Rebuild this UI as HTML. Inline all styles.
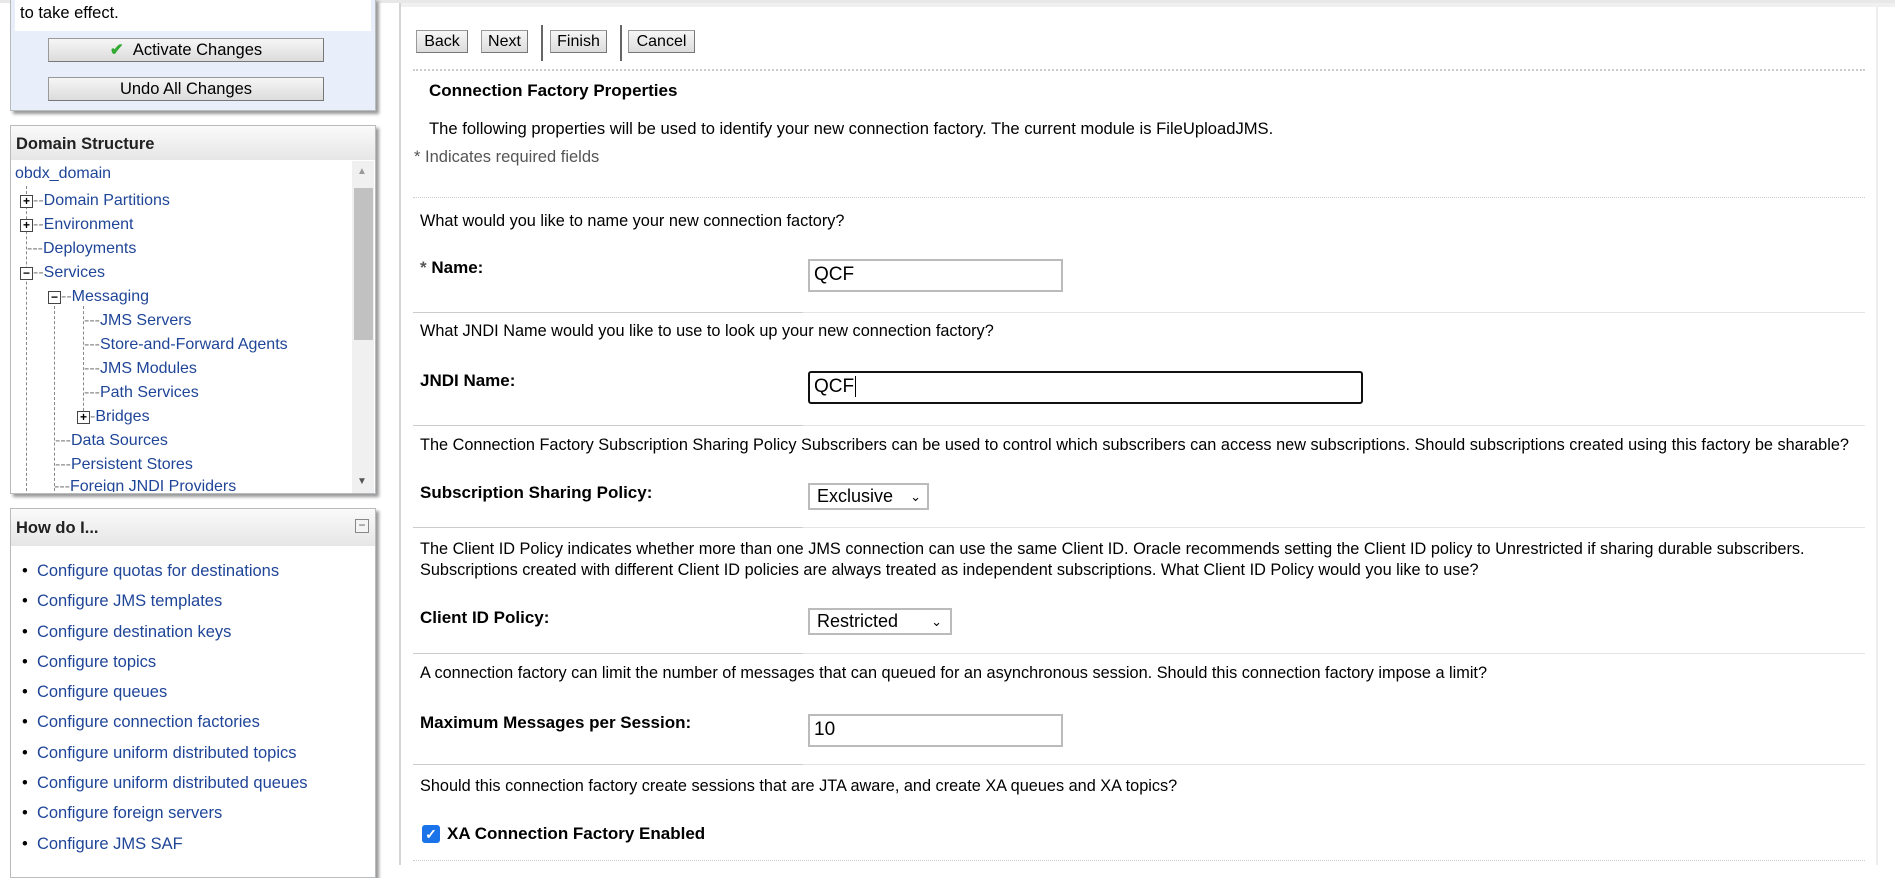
<!DOCTYPE html>
<html><head><meta charset="utf-8"><style>
*{box-sizing:border-box;margin:0;padding:0}
body{width:1895px;height:865px;overflow:hidden;background:#fff;font-family:"Liberation Sans",Tahoma,sans-serif;position:relative;color:#000}
.a{position:absolute;white-space:nowrap}
.lnk{color:#1f4598}
.panel{position:absolute;border:1px solid #b9bcbf;box-shadow:3px 3px 3px #999;background:#fff}
.btn{position:absolute;background:linear-gradient(#f6f6f6,#dcdcdc);border:1px solid #999;border-right-color:#777;border-bottom-color:#777;font-size:16px;text-align:center}
.q{font-size:16.3px}
.lbl{font-size:17px;font-weight:bold}
.hr{position:absolute;left:413px;width:1452px;height:0;border-top:1px dotted #ccc}
.hr2{position:absolute;left:413px;width:1452px;height:1px;background:linear-gradient(90deg,#ccc 0,#ccc 390px,#e4e4e4 390px)}
.inp{position:absolute;border:2px solid #bbb;background:#fff;font-size:19px;padding-left:4px;line-height:28px}
.tree{font-size:16px}
</style></head><body>
<div class="a" style="left:399px;top:0;width:2px;height:865px;background:#d4d4d4"></div>
<div class="a" style="left:0;top:0;width:1895px;height:3px;background:#e8e8e8"></div>
<div class="a" style="left:401px;top:3px;width:1494px;height:4px;background:#f0f0f0"></div>
<div class="a" style="left:1876px;top:7px;width:2px;height:858px;background:#eee"></div>

<div class="panel" style="left:10px;top:-2px;width:366px;height:113px;background:#e8eefa">
 <div class="a" style="left:4px;top:0;width:356px;height:32px;background:#fff"></div>
 <div class="a" style="left:9px;top:5px;font-size:16.5px">to take effect.</div>
</div>
<div class="btn" style="left:48px;top:38px;width:276px;height:24px;line-height:22px;font-size:16.5px"><span style="color:#3a3;font-weight:bold">✔</span>&nbsp;&nbsp;Activate Changes</div>
<div class="btn" style="left:48px;top:77px;width:276px;height:24px;line-height:22px;font-size:16.5px">Undo All Changes</div>

<div class="panel" style="left:10px;top:125px;width:366px;height:369px">
 <div class="a" style="left:0;top:0;width:364px;height:34px;background:linear-gradient(#fafafa,#e6e6e6);font-weight:bold;font-size:16.5px;padding:9px 5px;color:#222">Domain Structure</div>
 <div class="a" style="left:341px;top:35px;width:22px;height:332px;background:#f0f0f0"></div>
 <div class="a" style="left:343px;top:62px;width:19px;height:152px;background:#c1c1c1"></div>
 <div class="a" style="left:346px;top:40px;font-size:10px;color:#999">▲</div>
 <div class="a" style="left:346px;top:350px;font-size:10px;color:#555">▼</div>
</div>
<div class="a tree lnk" style="left:15px;top:165px">obdx_domain</div>
<div class="a" style="left:26px;top:186px;width:0;height:305px;border-left:1px dashed #888"></div>
<div class="a" style="left:54px;top:306px;width:0;height:185px;border-left:1px dashed #888"></div>
<div class="a" style="left:83px;top:306px;width:0;height:110px;border-left:1px dashed #888"></div>
<div class="a tree" style="left:20px;top:189px;line-height:24px">
 <div><span style="display:inline-block;width:13px;height:13px;border:1px solid #444;background:#fff;font-size:12px;line-height:10px;text-align:center;font-weight:bold">+</span><span style="color:#888">--</span><span class="lnk">Domain Partitions</span></div>
 <div><span style="display:inline-block;width:13px;height:13px;border:1px solid #444;background:#fff;font-size:12px;line-height:10px;text-align:center;font-weight:bold">+</span><span style="color:#888">--</span><span class="lnk">Environment</span></div>
 <div style="padding-left:7px"><span style="color:#888">---</span><span class="lnk">Deployments</span></div>
 <div><span style="display:inline-block;width:13px;height:13px;border:1px solid #444;background:#fff;font-size:12px;line-height:10px;text-align:center;font-weight:bold">−</span><span style="color:#888">--</span><span class="lnk">Services</span></div>
 <div style="padding-left:28px"><span style="display:inline-block;width:13px;height:13px;border:1px solid #444;background:#fff;font-size:12px;line-height:10px;text-align:center;font-weight:bold">−</span><span style="color:#888">--</span><span class="lnk">Messaging</span></div>
 <div style="padding-left:64px"><span style="color:#888">---</span><span class="lnk">JMS Servers</span></div>
 <div style="padding-left:64px"><span style="color:#888">---</span><span class="lnk">Store-and-Forward Agents</span></div>
 <div style="padding-left:64px"><span style="color:#888">---</span><span class="lnk">JMS Modules</span></div>
 <div style="padding-left:64px"><span style="color:#888">---</span><span class="lnk">Path Services</span></div>
 <div style="padding-left:57px"><span style="display:inline-block;width:13px;height:13px;border:1px solid #444;background:#fff;font-size:12px;line-height:10px;text-align:center;font-weight:bold">+</span><span style="color:#888">-</span><span class="lnk">Bridges</span></div>
 <div style="padding-left:35px"><span style="color:#888">---</span><span class="lnk">Data Sources</span></div>
 <div style="padding-left:35px"><span style="color:#888">---</span><span class="lnk">Persistent Stores</span></div>
</div>
<div class="a" style="left:11px;top:470px;width:340px;height:22px;overflow:hidden"><div class="a tree" style="left:43px;top:8px"><span style="color:#888">---</span><span class="lnk">Foreign JNDI Providers</span></div></div>

<div class="panel" style="left:10px;top:508px;width:366px;height:370px">
 <div class="a" style="left:0;top:0;width:364px;height:37px;background:linear-gradient(#fafafa,#e6e6e6);font-weight:bold;font-size:16.5px;padding:10px 5px;color:#222">How do I...</div>
 <div class="a" style="left:344px;top:10px;width:14px;height:14px;border:1px solid #888;background:#f4f4f4;font-size:12px;line-height:11px;text-align:center;color:#555">−</div>
</div>
<div class="a" style="left:22px;top:556px;font-size:16.5px;line-height:30.3px">
<div>•&nbsp;&nbsp;<span class="lnk">Configure quotas for destinations</span></div>
<div>•&nbsp;&nbsp;<span class="lnk">Configure JMS templates</span></div>
<div>•&nbsp;&nbsp;<span class="lnk">Configure destination keys</span></div>
<div>•&nbsp;&nbsp;<span class="lnk">Configure topics</span></div>
<div>•&nbsp;&nbsp;<span class="lnk">Configure queues</span></div>
<div>•&nbsp;&nbsp;<span class="lnk">Configure connection factories</span></div>
<div>•&nbsp;&nbsp;<span class="lnk">Configure uniform distributed topics</span></div>
<div>•&nbsp;&nbsp;<span class="lnk">Configure uniform distributed queues</span></div>
<div>•&nbsp;&nbsp;<span class="lnk">Configure foreign servers</span></div>
<div>•&nbsp;&nbsp;<span class="lnk">Configure JMS SAF</span></div>
</div>

<div class="btn" style="left:416px;top:30px;width:52px;height:23px;line-height:21px">Back</div>
<div class="btn" style="left:481px;top:30px;width:47px;height:23px;line-height:21px">Next</div>
<div class="a" style="left:541px;top:25px;width:2px;height:36px;background:#666"></div>
<div class="btn" style="left:550px;top:30px;width:57px;height:23px;line-height:21px">Finish</div>
<div class="a" style="left:620px;top:25px;width:2px;height:36px;background:#666"></div>
<div class="btn" style="left:628px;top:30px;width:67px;height:23px;line-height:21px">Cancel</div>
<div class="hr" style="top:69px;border-top:2px dotted #ccc"></div>

<div class="a" style="left:429px;top:81px;font-size:17px;font-weight:bold">Connection Factory Properties</div>
<div class="a" style="left:429px;top:119px;font-size:16.6px">The following properties will be used to identify your new connection factory. The current module is FileUploadJMS.</div>
<div class="a" style="left:414px;top:148px;font-size:16.5px;color:#555">* Indicates required fields</div>
<div class="hr" style="top:197px"></div>

<div class="a q" style="left:420px;top:212px">What would you like to name your new connection factory?</div>
<div class="a lbl" style="left:420px;top:258px"><span style="color:#555">*</span> Name:</div>
<div class="inp" style="left:808px;top:259px;width:255px;height:33px">QCF</div>
<div class="hr2" style="top:312px"></div>

<div class="a q" style="left:420px;top:322px">What JNDI Name would you like to use to look up your new connection factory?</div>
<div class="a lbl" style="left:420px;top:371px">JNDI Name:</div>
<div class="inp" style="left:808px;top:371px;width:555px;height:33px;border-color:#111;border-radius:3px">QCF<span style="border-left:1px solid #000;margin-left:1px"></span></div>
<div class="hr2" style="top:425px"></div>

<div class="a q" style="left:420px;top:436px">The Connection Factory Subscription Sharing Policy Subscribers can be used to control which subscribers can access new subscriptions. Should subscriptions created using this factory be sharable?</div>
<div class="a lbl" style="left:420px;top:483px">Subscription Sharing Policy:</div>
<div class="inp" style="left:808px;top:483px;width:121px;height:27px;line-height:23px;font-size:18px;padding-left:7px">Exclusive <span style="font-size:13px;position:absolute;right:6px;top:0">&#8964;</span></div>
<div class="hr2" style="top:527px"></div>

<div class="a q" style="left:420px;top:539px;line-height:21px">The Client ID Policy indicates whether more than one JMS connection can use the same Client ID. Oracle recommends setting the Client ID policy to Unrestricted if sharing durable subscribers.<br>Subscriptions created with different Client ID policies are always treated as independent subscriptions. What Client ID Policy would you like to use?</div>
<div class="a lbl" style="left:420px;top:608px">Client ID Policy:</div>
<div class="inp" style="left:808px;top:608px;width:144px;height:27px;line-height:23px;font-size:18px;padding-left:7px">Restricted <span style="font-size:13px;position:absolute;right:8px;top:0">&#8964;</span></div>
<div class="hr2" style="top:653px"></div>

<div class="a q" style="left:420px;top:664px">A connection factory can limit the number of messages that can queued for an asynchronous session. Should this connection factory impose a limit?</div>
<div class="a lbl" style="left:420px;top:713px">Maximum Messages per Session:</div>
<div class="inp" style="left:808px;top:714px;width:255px;height:33px">10</div>
<div class="hr2" style="top:764px"></div>

<div class="a q" style="left:420px;top:777px">Should this connection factory create sessions that are JTA aware, and create XA queues and XA topics?</div>
<div class="a" style="left:422px;top:825px;width:18px;height:18px;background:#1a73e8;border-radius:3px;color:#fff;font-size:14px;line-height:18px;text-align:center;font-weight:bold">✓</div>
<div class="a lbl" style="left:447px;top:824px;font-size:17px">XA Connection Factory Enabled</div>
<div class="hr" style="top:860px"></div>
</body></html>
